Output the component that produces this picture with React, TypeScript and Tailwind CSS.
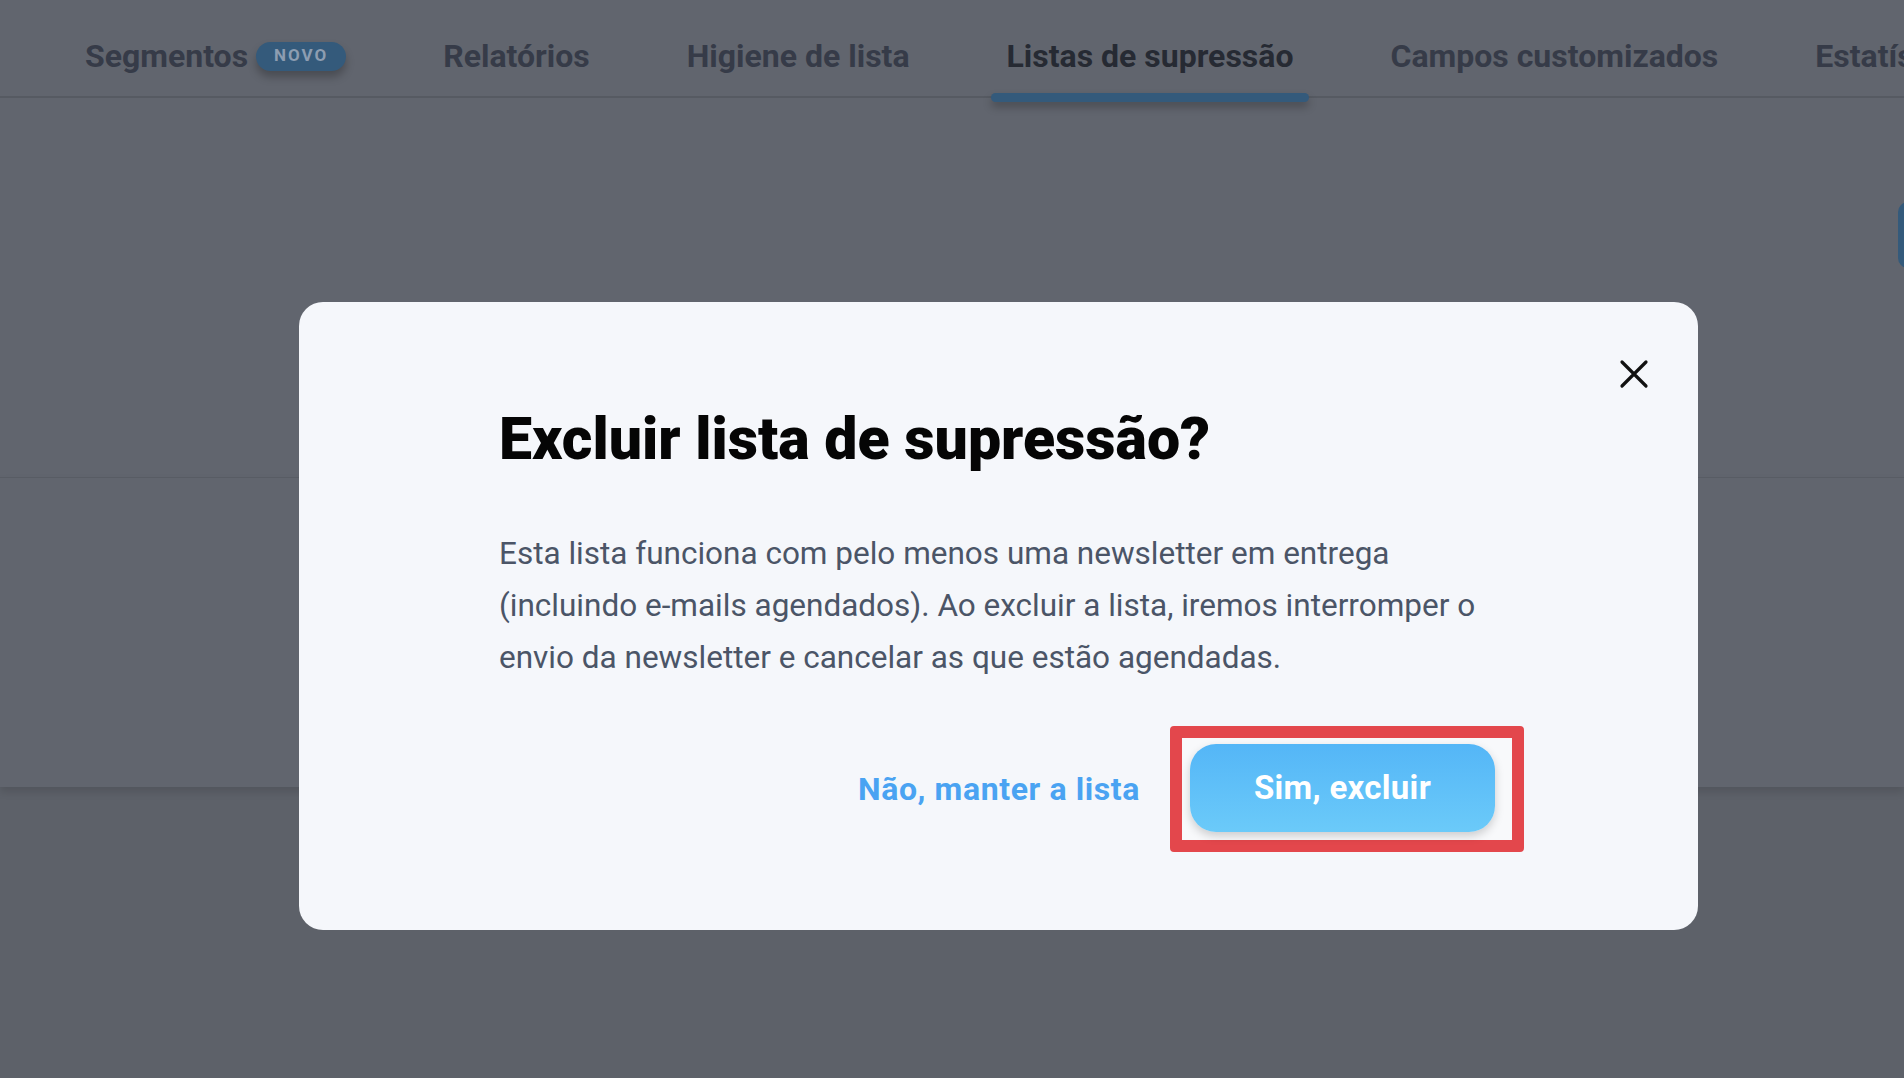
import React from "react";

const tabs = [
  { label: "Segmentos", badge: "NOVO" },
  { label: "Relatórios" },
  { label: "Higiene de lista" },
  { label: "Listas de supressão", active: true },
  { label: "Campos customizados" },
  { label: "Estatísticas" },
];

function CloseIcon() {
  return (
    <svg width="30" height="30" viewBox="0 0 30 30" fill="none">
      <path d="M3 3L27 27M27 3L3 27" stroke="#111111" strokeWidth="3.2" strokeLinecap="round" />
    </svg>
  );
}

export default function App() {
  return (
    <div className="relative h-[1078px] w-full overflow-hidden bg-[#61656e] font-['Roboto',sans-serif]">
      {/* tab bar behind the overlay */}
      <nav className="flex h-[98px] items-center gap-[65px] whitespace-nowrap border-b-2 border-[#565a62] pl-[69px] pt-[16px]">
        {tabs.map((t) => (
          <div key={t.label} className="relative flex h-full items-center px-4">
            <span
              className={`text-[32px] font-bold ${
                t.active ? "text-[#262a33]" : "text-[#363b48]"
              }`}
            >
              {t.label}
            </span>
            {t.badge && (
              <span className="ml-[8px] flex h-[29px] w-[90px] items-center justify-center rounded-full bg-[#345a7b] text-[17px] font-bold tracking-[2px] text-[#8d9db1] shadow-[0_6px_8px_rgba(0,0,0,0.25)]">
                {t.badge}
              </span>
            )}
            {t.active && (
              <div className="absolute bottom-[-6px] left-0 right-0 h-[9px] rounded-full bg-[#345a7b] shadow-[0_5px_8px_rgba(0,0,0,0.25)]" />
            )}
          </div>
        ))}
      </nav>

      {/* page card behind the overlay */}
      <div className="relative">
        <div className="h-[379px]" />
        <div className="h-[310px] border-t border-[#585c64] shadow-[0_5px_8px_rgba(0,0,0,0.12)]" />
        <div className="absolute right-[-20px] top-[104px] h-[66px] w-[26px] rounded-l-[10px] bg-[#345a7b]" />
      </div>
      <div className="h-full bg-[#5d6169]" />

      {/* modal */}
      <div className="absolute left-[299px] top-[302px] w-[1399px] rounded-[24px] bg-[#f5f7fb] px-[200px] pb-[78px] pt-[101px]">
        <button className="absolute right-[49px] top-[57px]">
          <CloseIcon />
        </button>
        <h1 className="text-[59px] font-black leading-[72px] text-[#050505]">
          Excluir lista de supressão?
        </h1>
        <p className="mt-[53px] text-[31.5px] leading-[52px] text-[#4b5567]">
          Esta lista funciona com pelo menos uma newsletter em entrega
          <br />
          (incluindo e-mails agendados). Ao excluir a lista, iremos interromper o
          <br />
          envio da newsletter e cancelar as que estão agendadas.
        </p>
        <div className="mr-[-26px] mt-[42px] flex items-center justify-end gap-[30px]">
          <button className="text-[32px] font-bold tracking-[0.6px] text-[#4aa3f2]">Não, manter a lista</button>
          <div className="h-[126px] w-[354px] rounded-[4px] border-[12px] border-[#e3474c] bg-[#f8f9fb] pl-[8px] pt-[6px]">
            <button className="flex h-[88px] w-[305px] items-center justify-center rounded-[26px] bg-gradient-to-b from-[#54b6f7] to-[#6bcaf9] text-[33px] font-bold tracking-[0.3px] text-white shadow-[0_4px_10px_rgba(0,0,0,0.18)]">
              Sim, excluir
            </button>
          </div>
        </div>
      </div>
    </div>
  );
}
